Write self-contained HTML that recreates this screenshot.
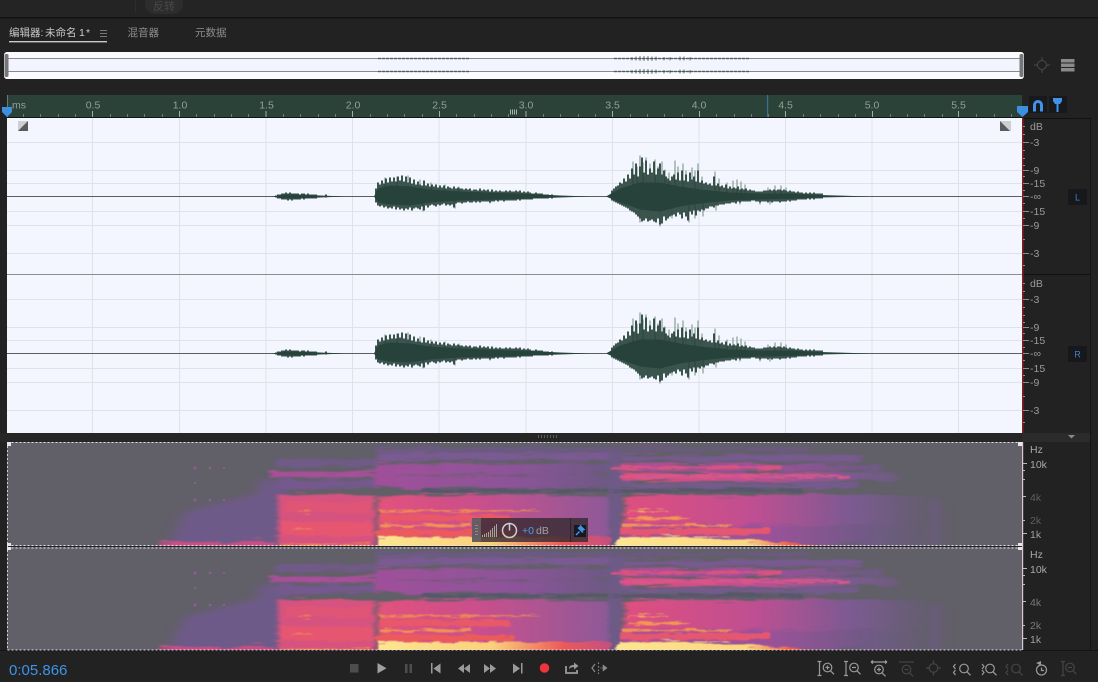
<!DOCTYPE html>
<html><head><meta charset="utf-8"><style>
html,body{margin:0;padding:0;background:#222;width:1098px;height:682px;overflow:hidden}
svg{display:block;position:absolute;left:0;top:0;filter:blur(.35px)}
text{font-family:"Liberation Sans","Noto Sans CJK SC",sans-serif}
</style></head><body>
<svg width="1098" height="682" viewBox="0 0 1098 682" xmlns="http://www.w3.org/2000/svg">
<defs>
<filter id="big" filterUnits="userSpaceOnUse" x="0" y="430" width="1098" height="130"><feGaussianBlur stdDeviation="6 3"/></filter>
<filter id="rough" filterUnits="userSpaceOnUse" x="0" y="430" width="1098" height="130"><feTurbulence type="fractalNoise" baseFrequency=".025 .4" numOctaves="3" seed="4" result="n"/><feDisplacementMap in="SourceGraphic" in2="n" scale="11" xChannelSelector="R" yChannelSelector="G"/><feGaussianBlur stdDeviation="2.2 .7"/></filter>
<filter id="rough2" filterUnits="userSpaceOnUse" x="0" y="430" width="1098" height="130"><feTurbulence type="fractalNoise" baseFrequency=".05 .5" numOctaves="3" seed="9" result="n"/><feDisplacementMap in="SourceGraphic" in2="n" scale="7" xChannelSelector="R" yChannelSelector="G"/><feGaussianBlur stdDeviation=".9 .4"/></filter>
<linearGradient id="g1" gradientUnits="userSpaceOnUse" x1="375" x2="610" y1="0" y2="0"><stop offset="0" stop-color="#e2527c"/><stop offset=".45" stop-color="#c94f8c"/><stop offset="1" stop-color="#8d5a98"/></linearGradient>
<linearGradient id="g2" gradientUnits="userSpaceOnUse" x1="375" x2="610" y1="0" y2="0"><stop offset="0" stop-color="#a0509a"/><stop offset=".6" stop-color="#8c5398"/><stop offset="1" stop-color="#6c5a84"/></linearGradient>
<linearGradient id="g3" gradientUnits="userSpaceOnUse" x1="610" x2="930" y1="0" y2="0"><stop offset="0" stop-color="#e2507c"/><stop offset=".45" stop-color="#bf4f92"/><stop offset=".75" stop-color="#7c5a92"/><stop offset="1" stop-color="#625e6c"/></linearGradient>
<linearGradient id="g4" gradientUnits="userSpaceOnUse" x1="610" x2="930" y1="0" y2="0"><stop offset="0" stop-color="#b04f96"/><stop offset=".5" stop-color="#9a5199"/><stop offset=".8" stop-color="#705a86"/><stop offset="1" stop-color="#625e6c"/></linearGradient>
<linearGradient id="g5" gradientUnits="userSpaceOnUse" x1="610" x2="860" y1="0" y2="0"><stop offset="0" stop-color="#fde690"/><stop offset=".55" stop-color="#fbd77e"/><stop offset=".72" stop-color="#f0604e"/><stop offset="1" stop-color="#9a4f90"/></linearGradient>
<linearGradient id="g6" gradientUnits="userSpaceOnUse" x1="375" x2="610" y1="0" y2="0"><stop offset="0" stop-color="#fde690"/><stop offset=".5" stop-color="#fbd07a"/><stop offset=".8" stop-color="#ee5a58"/><stop offset="1" stop-color="#c64f80"/></linearGradient>
<clipPath id="c1"><rect x="7" y="442" width="1015" height="104"/></clipPath>
<clipPath id="c2"><rect x="7" y="547" width="1015" height="103"/></clipPath>

<g id="spec">
<rect x="7" y="442" width="1015" height="105" fill="#615f68"/>
<g filter="url(#big)">
<polygon points="165,552 185,512 270,490 270,552" fill="#6e5a88"/>
<rect x="258" y="480" width="30" height="72" fill="#6e5a88"/>
<rect x="850" y="500" width="90" height="50" fill="#6a5c7c"/>
</g>
<g filter="url(#rough)">
<rect x="160" y="542" width="115" height="6" fill="#c84f86"/>
<rect x="275" y="459" width="100" height="8" fill="#6f5a88"/>
<rect x="270" y="471" width="105" height="6" fill="#a8509a"/>
<rect x="278" y="480" width="97" height="8" fill="#74598e"/>
<rect x="278" y="495" width="97" height="51" fill="#d6527f"/>
<rect x="375" y="447" width="235" height="5" fill="#6b5a82"/>
<rect x="375" y="453" width="235" height="7" fill="#7a5a92"/>
<rect x="375" y="463" width="235" height="12" fill="url(#g2)"/>
<rect x="375" y="476" width="235" height="12" fill="url(#g2)"/>
<rect x="378" y="495" width="232" height="50" fill="url(#g1)"/>
<rect x="610" y="447" width="200" height="4" fill="#6b5a7e"/>
<rect x="612" y="455" width="250" height="6" fill="#775a8e"/>
<rect x="612" y="464" width="270" height="7" fill="url(#g4)"/>
<rect x="618" y="473" width="280" height="8" fill="url(#g3)"/>
<rect x="618" y="483" width="240" height="5" fill="#745a8e"/>
<rect x="625" y="495" width="305" height="30" fill="url(#g3)"/>
<rect x="620" y="525" width="310" height="20" fill="url(#g4)"/>
<rect x="608" y="452" width="14" height="93" fill="#6d5a86"/>
</g>
<g filter="url(#rough2)">
<rect x="420" y="489" width="190" height="3" fill="#56566c"/>
<rect x="612" y="489" width="190" height="3" fill="#56566c"/>
<rect x="282" y="522" width="90" height="14" fill="#e65670"/>
<rect x="285" y="502" width="85" height="10" fill="#e05574"/>
<rect x="298" y="511" width="12" height="1.500" fill="#f0805a" opacity=".8"/>
<rect x="292" y="528" width="20" height="1.500" fill="#f0805a" opacity=".8"/>
<rect x="280" y="544" width="90" height="2" fill="#f0804e"/>
<rect x="380" y="510" width="160" height="1.600" fill="#f2904c" opacity=".85"/>
<rect x="380" y="524" width="90" height="2.500" fill="#f4984e" opacity=".9"/>
<rect x="380" y="515" width="130" height="6" fill="#e85868"/>
<rect x="375" y="530" width="140" height="6" fill="#ec5a5c"/>
<rect x="378" y="537" width="232" height="12" fill="url(#g6)"/>
<rect x="628" y="510" width="40" height="2" fill="#f5b060" opacity=".9"/>
<rect x="628" y="517" width="60" height="2.500" fill="#f5a050" opacity=".9"/>
<rect x="622" y="524" width="110" height="2.500" fill="#f59a4e" opacity=".9"/>
<rect x="620" y="528" width="150" height="7" fill="#e55670"/>
<polygon points="610,550 620,537 680,536 770,541 860,550" fill="url(#g5)"/>
<rect x="620" y="475" width="230" height="3" fill="#d8568a"/>
<rect x="612" y="466" width="170" height="3" fill="#d8527f"/>
</g>
<g fill="#86608f">
<circle cx="195" cy="468" r="1.600"/><circle cx="210" cy="468" r="1.400"/><circle cx="224" cy="468" r="1.200"/>
<circle cx="195" cy="500" r="1.600"/><circle cx="210" cy="500" r="1.400"/><circle cx="224" cy="500" r="1.200"/>
<circle cx="195" cy="483" r="1.200"/>
</g>
</g>

<g id="wave">
<path stroke="#8fa39b" stroke-width="1.300" fill="none" d="M633 0V-35M637 0V-30M640 0V-41M643 0V-34M646 0V-39M650 0V-33M655 0V-37M658 0V-30M662 0V-35M665 0V-27M669 0V-24M675 0V-36M678 0V-30M683 0V-33M686 0V-26M692 0V-29M695 0V-26M698 0V-33M702 0V-20M715 0V-25M719 0V-18M727 0V-14M733 0V-16M737 0V-17M741 0V-15M745 0V-12M768 0V-9M775 0V-11M781 0V-11M786 0V-9M640 0V26M648 0V24M660 0V30M672 0V22M689 0V26M695 0V22M703 0V20M716 0V14M740 0V8M760 0V8M770 0V8M385 0V-19M397 0V-20M408 0V-21M420 0V-17M431 0V-14M445 0V-12M459 0V-10M490 0V7M455 0V12M423 0V15"/>
<path fill="#27423a" d="M272 0L284-2L300-2L320-1L345 0L320 1L300 2L284 2ZM374 0L378-8L390-11L410-10L430-7L460-5L500-3.500L530-2.500L560-1L590 0L560 1L530 2L500 3L460 4L430 6L410 9L390 8L378 6ZM606 0L620-8L640-14L660-14L680-10L700-7L730-4L760-3L790-3L820-1.500L870 0L820 1L790 2.500L760 3L730 4L700 7L680 10L660 15L640 13L620 6Z"/>
<path stroke="#27423a" stroke-width="1.800" fill="none" d="M276-1V1M278-2V2M280-2V2M282-3V3M284-3V3M286-4V3M288-3V4M290-4V3M292-3V4M294-3V3M296-3V3M298-3V3M300-2V3M302-3V2M304-3V3M306-2V2M308-3V2M310-2V2M312-2V2M314-2V2M316-2V2M326-2V1M376-8V6M378-14V9M380-12V10M382-16V9M384-13V11M386-18V10M388-14V12M390-19V11M392-15V12M394-19V10M396-15V13M398-20V11M400-16V13M402-21V12M404-15V14M406-20V12M408-14V13M410-19V11M412-13V14M414-17V12M416-12V11M418-15V12M420-12V13M422-11V10M424-16V14M426-11V9M428-13V11M430-10V9M432-12V8M434-10V9M436-12V10M438-9V8M440-11V9M442-9V8M444-11V7M446-8V9M448-10V8M450-9V9M452-8V8M454-10V11M456-8V7M458-9V6M460-8V6M462-8V7M464-7V6M466-8V6M468-7V5M470-8V6M472-6V6M474-7V5M476-7V6M478-6V5M480-8V6M482-6V5M484-7V5M486-6V5M488-7V5M490-5V6M492-7V5M494-5V5M496-6V4M498-5V5M500-6V4M502-5V4M504-5V5M506-6V4M508-5V4M510-6V4M512-5V4M514-5V4M516-6V4M518-5V3M520-6V4M522-4V3M524-5V3M526-4V3M528-5V3M530-4V3M532-3V3M534-3V2M536-4V2M538-3V2M540-3V2M542-3V2M544-2V2M546-2V2M548-2V2M552-2V2M612-6V4M614-8V5M616-10V6M618-11V7M620-14V8M622-13V9M624-18V10M626-15V11M628-22V12M630-18V14M632-28V15M634-22V16M636-33V18M638-20V20M640-30V22M642-39V25M644-24V24M646-36V22M648-22V25M650-28V24M652-24V23M654-35V25M656-22V26M658-28V22M660-33V28M662-22V27M664-26V20M666-20V24M668-18V22M670-16V20M672-20V19M674-22V18M676-17V20M678-24V16M680-16V18M682-26V22M684-16V16M686-22V20M688-15V24M690-24V15M692-17V18M694-20V14M696-15V19M698-26V14M700-14V15M702-16V13M704-13V14M706-14V12M708-12V12M710-13V10M712-11V10M714-20V11M716-11V9M718-13V9M720-10V8M722-11V8M724-9V8M726-12V7M728-8V7M730-10V7M732-8V6M734-9V6M736-8V7M738-10V5M740-7V6M742-8V5M744-7V5M746-8V5M748-6V5M750-7V5M752-6V4M754-6V4M756-5V5M758-5V5M760-5V6M762-5V5M764-6V5M766-6V5M768-6V6M770-7V5M772-6V6M774-7V5M776-6V5M778-7V5M780-7V6M782-6V5M784-7V5M786-6V5M788-5V4M790-6V5M792-5V4M794-5V4M796-4V4M798-5V3M800-4V3M802-4V3M804-3V3M806-4V3M808-3V2M810-4V3M812-3V2M814-4V3M816-3V2M818-3V2M820-3V2M822-3V2"/>
</g>

<g id="ovw">
<path stroke="#3a4f46" stroke-width="1.600" stroke-dasharray="3 1" opacity=".7" fill="none" d="M378 .5H470M614 .5H750"/>
<path stroke="#7b8a84" stroke-width="1" stroke-dasharray="3 3" opacity=".7" fill="none" d="M470 .5H522M750 .5H800"/>
<path stroke="#33483f" stroke-width="1" opacity=".7" fill="none" d="M632-1V2.500M636-1.500V2.500M640-2V3M644-2V3M648-2V3M652-1.500V3M656-1.500V2.500M664-1V2.500M670-1V2.500M680-1.500V2.500M684-1.500V2.500M690-1V2.500"/>
</g>
</defs>

<rect width="1098" height="682" fill="#222"/>
<!-- top bar -->
<rect width="1098" height="17" fill="#242424"/>
<rect y="17" width="1098" height="1.500" fill="#131313"/>
<rect x="135" y="0" width="1" height="13" fill="#2e2e2e"/>
<rect x="145" y="-6" width="38" height="20" rx="10" fill="#2d2d2d"/>
<text x="153" y="10" font-size="11" fill="#494949">反转</text>

<!-- tabs -->
<g font-size="10.500" fill="#c8c8c8">
<text x="9" y="36">编辑器</text><text x="40.500" y="36">:</text><text x="45" y="36">未命名</text><text x="79" y="36">1</text><text x="86" y="36">*</text>
</g>
<rect x="9" y="41" width="98" height="1.400" fill="#c8c8c8"/>
<path d="M100 30.500h7M100 33.500h7M100 36.500h7" stroke="#777" stroke-width="1"/>
<text x="127.500" y="36" font-size="10.500" fill="#8e8e8e">混音器</text>
<text x="195" y="36" font-size="10.500" fill="#8e8e8e">元数据</text>

<!-- overview -->
<rect x="4" y="52" width="1020" height="27" rx="3" fill="#fafaff"/>
<rect x="8" y="59" width="1012" height="12" fill="#f3f5fe"/>
<rect x="8" y="58" width="1012" height="1" fill="#8a8a8e"/>
<rect x="8" y="71" width="1012" height="1" fill="#8a8a8e"/>
<rect x="4.500" y="54" width="4" height="23" rx="1.500" fill="#77777a"/>
<rect x="1019.500" y="54" width="4" height="23" rx="1.500" fill="#77777a"/>
<use href="#ovw" transform="translate(0,58)"/>
<use href="#ovw" transform="translate(0,71)"/>

<!-- overview right icons -->
<g stroke="#4a4a4a" fill="none" stroke-width="1"><circle cx="1042" cy="65" r="4.500"/><path d="M1042 57v4M1042 69v4M1034 65h4M1046 65h4"/></g>
<g fill="#8a8a8a"><rect x="1061" y="59" width="13.500" height="3.500"/><rect x="1061" y="63.500" width="13.500" height="3.500"/><rect x="1061" y="68" width="13.500" height="3.500"/></g>

<!-- ruler -->
<rect x="7" y="95" width="1015" height="22" fill="#2b4239"/>
<rect x="7" y="117" width="1015" height="1" fill="#141414"/>
<rect x="7" y="95" width="1" height="22" fill="#6a7a74"/>
<g font-size="10.500" fill="#8fa29a" text-anchor="middle">
<text x="19" y="108.500">ms</text><text x="93" y="108.500">0.5</text><text x="180" y="108.500">1.0</text><text x="266.500" y="108.500">1.5</text><text x="353" y="108.500">2.0</text><text x="439.500" y="108.500">2.5</text><text x="526" y="108.500">3.0</text><text x="612.500" y="108.500">3.5</text><text x="699" y="108.500">4.0</text><text x="785.500" y="108.500">4.5</text><text x="872" y="108.500">5.0</text><text x="958.500" y="108.500">5.5</text>
</g>
<path stroke="#9db0a8" stroke-width="1" fill="none" d="M92.500 111v6M179.500 111v6M266 111v6M352.500 111v6M439.500 111v6M526 111v6M612.500 111v6M699.500 111v6M785.500 111v6M872.500 111v6M958.500 111v6"/>
<path stroke="#6c8078" stroke-width="1" fill="none" d="M23.500 114v3M40.500 114v3M58.500 114v3M75.500 114v3M110.500 114v3M127.500 114v3M144.500 114v3M162.500 114v3M196.500 114v3M214.500 114v3M231.500 114v3M248.500 114v3M283.500 114v3M300.500 114v3M318.500 114v3M335.500 114v3M370.500 114v3M387.500 114v3M404.500 114v3M422.500 114v3M456.500 114v3M474.500 114v3M491.500 114v3M508.500 114v3M543.500 114v3M560.500 114v3M578.500 114v3M595.500 114v3M630.500 114v3M647.500 114v3M664.500 114v3M682.500 114v3M716.500 114v3M734.500 114v3M751.500 114v3M768.500 114v3M803.500 114v3M820.500 114v3M838.500 114v3M855.500 114v3M890.500 114v3M907.500 114v3M924.500 114v3M942.500 114v3M976.500 114v3M994.500 114v3M1011.500 114v3"/>
<path stroke="#a9b8b2" stroke-width="1" fill="none" d="M510.500 109.500v5M512.500 109.500v5M514.500 109.500v5M516.500 109.500v5"/>
<rect x="767" y="95" width="1.200" height="22" fill="#3d6f96"/>
<!-- playhead markers -->
<path d="M2 107h10v5l-5 5l-5-5z" fill="#3d8fe0"/>
<path d="M1017 106h11v6l-5.500 5l-5.500-5z" fill="#3d8fe0"/>
<!-- headphone + pin buttons -->
<rect x="1029" y="96" width="18" height="17" fill="#17191c"/>
<rect x="1049" y="96" width="18" height="17" fill="#17191c"/>
<path d="M1034.500 111.500v-6.500a3.500 3.500 0 0 1 7 0v6.500" fill="none" stroke="#3f93e8" stroke-width="3"/>
<path d="M1053 98h9v3l-2 3h-1.500v8h-2v-8H1055l-2-3z" fill="#3f93e8"/>

<!-- waveform area -->
<rect x="7" y="118" width="1015" height="315" fill="#f4f6ff"/>
<path stroke="#e0e2ea" stroke-width="1" fill="none" d="M92.500 118V433M179.500 118V433M266 118V433M352.500 118V433M439 118V433M526 118V433M612.500 118V433M699 118V433M785.500 118V433M872 118V433M958.500 118V433M7 142.500H1022M7 170.500H1022M7 183.500H1022M7 211.500H1022M7 225.500H1022M7 253.500H1022M7 299.500H1022M7 327.500H1022M7 340.500H1022M7 368.500H1022M7 382.500H1022M7 410.500H1022"/>
<rect x="7" y="196" width="1015" height="1" fill="#5c5f60"/>
<rect x="7" y="353" width="1015" height="1" fill="#5c5f60"/>
<rect x="7" y="274" width="1015" height="1" fill="#8c8d90"/>
<use href="#wave" transform="translate(0,196.500)"/>
<use href="#wave" transform="translate(0,353.500)"/>
<!-- fades -->
<rect x="18" y="121" width="10" height="10" fill="#cfcfd2"/><path d="M18 131L28 121V131z" fill="#5a5a5c"/>
<rect x="1000" y="121" width="11" height="10" fill="#cfcfd2"/><path d="M1000 121L1010 131H1000z" fill="#5a5a5c"/>

<!-- right panel -->
<rect x="1022" y="118" width="68" height="1" fill="#111"/>
<rect x="1022" y="274" width="68" height="1" fill="#111"/>
<rect x="1090" y="118" width="1" height="533" fill="#141414"/>
<rect x="1022" y="118" width="1.500" height="315" fill="#8a1c1e"/>
<path stroke="#8f8f8f" stroke-width="1" fill="none" d="M1023 126.500h2M1023 134.500h2M1023 142.500h6M1023 150.500h2M1023 158.500h2M1023 165.500h2M1023 170.500h6M1023 176.500h2M1023 183.500h6M1023 190.500h2M1023 196.500h6M1023 203.500h2M1023 211.500h6M1023 218.500h2M1023 225.500h6M1023 239.500h2M1023 253.500h6M1023 265.500h2M1023 283.500h2M1023 291.500h2M1023 299.500h6M1023 307.500h2M1023 315.500h2M1023 322.500h2M1023 327.500h6M1023 333.500h2M1023 340.500h6M1023 347.500h2M1023 353.500h6M1023 360.500h2M1023 368.500h6M1023 375.500h2M1023 382.500h6M1023 396.500h2M1023 410.500h6M1023 422.500h2"/>
<g font-size="10.500" fill="#9a9a9a">
<text x="1030" y="130">dB</text><text x="1030" y="146">-3</text><text x="1030" y="174">-9</text><text x="1030" y="187">-15</text><text x="1030" y="200">-∞</text><text x="1030" y="215">-15</text><text x="1030" y="229">-9</text><text x="1030" y="257">-3</text>
<text x="1030" y="287">dB</text><text x="1030" y="303">-3</text><text x="1030" y="331">-9</text><text x="1030" y="344">-15</text><text x="1030" y="357">-∞</text><text x="1030" y="372">-15</text><text x="1030" y="386">-9</text><text x="1030" y="414">-3</text>
</g>
<rect x="1068" y="189" width="19" height="16" fill="#16181b"/>
<rect x="1068" y="346" width="19" height="16" fill="#16181b"/>
<text x="1077.500" y="200.500" font-size="9" fill="#3f7fc4" text-anchor="middle">L</text>
<text x="1077.500" y="357.500" font-size="9" fill="#3f7fc4" text-anchor="middle">R</text>

<!-- divider -->
<rect x="0" y="433" width="1090" height="9" fill="#262626"/>
<rect x="1022" y="433" width="68" height="9" fill="#2b2b2b"/>
<path stroke="#5a5a5a" stroke-width="1" fill="none" d="M538.500 435v3M541.500 435v3M544.500 435v3M547.500 435v3M550.500 435v3M553.500 435v3M556.500 435v3"/>
<path d="M1068 435h7l-3.500 3.500z" fill="#8a8a8a"/>

<!-- spectrogram -->
<g clip-path="url(#c1)"><use href="#spec"/></g>
<g clip-path="url(#c2)"><use href="#spec" transform="translate(0,105)"/></g>
<rect x="7" y="546" width="1015" height="1" fill="#222"/>
<rect x="0" y="650" width="1098" height="1" fill="#141414"/>
<path d="M7.500 442.500H1021.500M7.500 545.500H1021.500M7.500 548H1021.500M7.500 650H1021.500" stroke="#e6e2ea" stroke-width="1" stroke-dasharray="2 2" fill="none"/>
<path d="M7.500 442V650" stroke="#cfcfd4" stroke-width="1" stroke-dasharray="2 2" fill="none"/>
<rect x="1022" y="442" width="1.200" height="208" fill="#d9c9d2"/>
<g fill="#e8e6ea"><rect x="7" y="442" width="4" height="4"/><rect x="1018" y="442" width="4" height="4"/><rect x="7" y="543" width="4" height="3"/><rect x="1018" y="543" width="4" height="3"/><rect x="7" y="547" width="4" height="3"/><rect x="1018" y="547" width="4" height="3"/></g>
<path stroke="#bbb" stroke-width="1" fill="none" d="M1023 463.500h4M1023 470.500h2M1023 479.500h2M1023 496.500h3M1023 520.500h2M1023 533.500h4M1023 568.500h4M1023 575.500h2M1023 584.500h2M1023 601.500h3M1023 625.500h2M1023 638.500h4"/>
<g font-size="10.500">
<text x="1030" y="453" fill="#a8a8a8">Hz</text><text x="1030" y="468" fill="#a8a8a8">10k</text><text x="1030" y="501" fill="#5e5e5e">4k</text><text x="1030" y="524" fill="#5e5e5e">2k</text><text x="1030" y="538" fill="#a0a0a0">1k</text>
<text x="1030" y="558" fill="#a8a8a8">Hz</text><text x="1030" y="573" fill="#a8a8a8">10k</text><text x="1030" y="606" fill="#7a7a7a">4k</text><text x="1030" y="629" fill="#7a7a7a">2k</text><text x="1030" y="643" fill="#a0a0a0">1k</text>
</g>

<!-- HUD -->
<rect x="472" y="518" width="116" height="24" fill="#332b30" opacity=".8"/>
<rect x="472" y="518" width="9" height="24" fill="#6a6468" opacity=".85"/>
<path stroke="#8a8a8a" stroke-width="1" fill="none" d="M475 525.500h3M475 528.500h3M475 531.500h3M475 534.500h3"/>
<path stroke="#a4a4a4" stroke-width="1" fill="none" d="M482.500 535v2M484.500 534v3M486.500 533v4M488.500 532v5M490.500 530v7M492.500 528v9M494.500 526v11M496.500 524v13"/>
<circle cx="509.500" cy="530.500" r="7" fill="none" stroke="#cfcfcf" stroke-width="1.500"/>
<path d="M509.500 524v6.500" stroke="#cfcfcf" stroke-width="1.500"/>
<text x="522" y="534" font-size="10.500" fill="#4a9fe8">+0</text>
<text x="536" y="534" font-size="10.500" fill="#a0a0a0">dB</text>
<rect x="570" y="518" width="1" height="24" fill="#2a2528"/>
<rect x="574" y="525" width="12" height="12" fill="#17191c"/>
<path d="M576 535l3.500-3.500M578 527.500l5 5M580.500 526l3.500 3.500l-2 1l-2.500-2.500z" stroke="#3f93e8" stroke-width="1.500" fill="#3f93e8"/>

<!-- time -->
<text x="9" y="675" font-size="15" fill="#3f93e8">0:05.866</text>

<!-- transport -->
<rect x="350" y="664" width="8.500" height="8.500" fill="#4d4d4d"/>
<path d="M377.500 663v10.500l9-5.250z" fill="#a0a0a0"/>
<path d="M405 664h2.500v9H405zM409.500 664H412v9h-2.500z" fill="#4d4d4d"/>
<path d="M431 663h1.500v10.500H431zM440.500 663.500v10l-7-5z" fill="#9a9a9a"/>
<path d="M458 668.500l6-4.500v9zM464 668.500l6-4.500v9z" fill="#9a9a9a"/>
<path d="M496 668.500l-6-4.500v9zM490 668.500l-6-4.500v9z" fill="#9a9a9a"/>
<path d="M513 663.500v10l7-5zM521 663h1.500v10.500H521z" fill="#9a9a9a"/>
<circle cx="544.500" cy="668" r="4.800" fill="#ee343c"/>
<path d="M566 666v7h11v-3" fill="none" stroke="#9a9a9a" stroke-width="1.800"/>
<path d="M569 669c0-3 2-4 5-4v-2.500l4.500 3.500l-4.500 3.500v-2.500c-2 0-3.500 .500-5 2z" fill="#9a9a9a"/>
<path d="M595 664l-3 4l3 4M598.500 662.500v1.500M598.500 666v1.500M598.500 669.500v1.500M598.500 672.500v1.500" stroke="#8a8a8a" stroke-width="1.200" fill="none"/>
<path d="M600 668h3v-3l4 3l-4 3v-3z" fill="#8a8a8a" stroke="#8a8a8a" stroke-width=".6"/>

<!-- zoom tools -->
<g fill="none" stroke="#9a9a9a" stroke-width="1.200">
<path d="M819.500 661v15M817.500 661.500h4M817.500 675.500h4"/>
<circle cx="827.500" cy="667.500" r="4.300"/><path d="M830.500 670.800l3.500 3.500M825.500 667.500h4M827.500 665.500v4"/>
<path d="M846 661v15M844 661.500h4M844 675.500h4"/>
<circle cx="854" cy="667.500" r="4.300"/><path d="M857 670.800l3.500 3.500M852 667.500h4"/>
<path d="M871 662h16M871 662l2-1.500M871 662l2 1.500M887 662l-2-1.500M887 662l-2 1.500"/>
<circle cx="879" cy="669.500" r="4.300"/><path d="M882 672.800l3.500 3.500M877 669.500h4M879 667.500v4"/>
<path d="M955.500 664l-2 2.500l2 2.500M955.500 670l-2 2.500l2 2.500"/>
<circle cx="964" cy="668.500" r="4.300"/><path d="M967 671.800l3.500 3.500"/>
<path d="M982 664l2 2.500l-2 2.500M982 670l2 2.500l-2 2.500"/>
<circle cx="990" cy="668.500" r="4.300"/><path d="M993 671.800l3.500 3.500"/>
<circle cx="1041.500" cy="670" r="5"/><path d="M1041.500 667.500v3h2.500"/>
</g>
<path d="M1036 663l5 -2v4.500z" fill="#9a9a9a"/>
<g fill="none" stroke="#454545" stroke-width="1.200">
<path d="M899 662h15"/><circle cx="906.500" cy="669.500" r="4.300"/><path d="M909.500 672.800l3.500 3.500M904.500 669.500h4"/>
<circle cx="933.500" cy="668" r="4.300"/><path d="M933.500 660.500v4M933.500 671.500v4M926 668h4M937 668h4"/>
<path d="M1008 664l-2 2.500l2 2.500M1008 670l-2 2.500l2 2.500"/><circle cx="1016" cy="668.500" r="4.300"/><path d="M1019 671.800l3.500 3.500"/>
<path d="M1063 661v15M1061 661.500h4M1061 675.500h4"/><circle cx="1070" cy="667.500" r="4.300"/><path d="M1073 670.800l3.500 3.500M1068 667.500h4"/>
</g>
</svg>
</body></html>
